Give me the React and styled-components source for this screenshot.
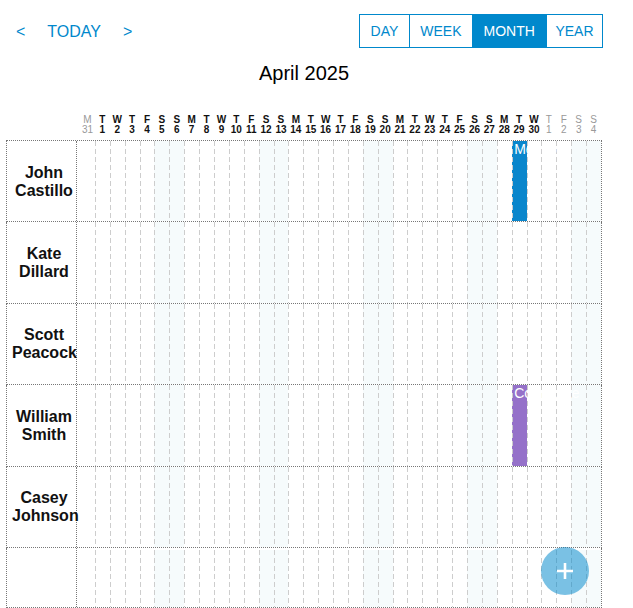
import React from 'react';
import styled, { createGlobalStyle } from 'styled-components';

const BLUE = '#0088cc';

const GlobalStyle = createGlobalStyle`
  html, body { margin: 0; padding: 0; background: #fff; }
  body { font-family: "Liberation Sans", Arial, sans-serif; color: #000; }
`;

const Page = styled.div`
  position: relative;
  width: 597px;
  margin-left: 6px;
`;

const Toolbar = styled.div`
  display: flex;
  align-items: center;
  justify-content: space-between;
  padding-top: 14px;
`;

const Nav = styled.div`
  display: flex;
  align-items: center;
  gap: 22px;
  padding-left: 10px;
  padding-top: 1px;
`;

const NavButton = styled.button`
  border: 0;
  background: none;
  padding: 0;
  font-family: inherit;
  font-size: 16px;
  line-height: 18px;
  color: ${BLUE};
  cursor: pointer;
`;

const ViewSwitch = styled.div`
  display: flex;
  border: 1px solid ${BLUE};
  height: 32px;
`;

const ViewButton = styled.button`
  border: 0;
  border-left: ${p => (p.$first ? '0' : `1px solid ${BLUE}`)};
  background: ${p => (p.$active ? BLUE : '#fff')};
  color: ${p => (p.$active ? '#fff' : BLUE)};
  font-family: inherit;
  font-size: 14px;
  padding: 0 ${p => p.$pad || 10}px;
  height: 32px;
  cursor: pointer;
`;

const Title = styled.h1`
  margin: 14px 0 0;
  text-align: center;
  font-size: 20px;
  font-weight: normal;
  line-height: 23px;
  width: 596px;
`;

const HeaderRow = styled.div`
  display: flex;
  margin-top: 30px;
  padding-bottom: 5px;
  width: 596px;
`;

const HeaderSpacer = styled.div`
  width: 74px;
  flex: none;
`;

const DaysGrid = styled.div`
  display: grid;
  grid-template-columns: repeat(35, minmax(0, 1fr));
  width: 521px;
  flex: none;
`;

const DayLabel = styled.div`
  display: flex;
  flex-direction: column;
  align-items: center;
  font-size: 10px;
  line-height: 10px;
  font-weight: ${p => (p.$muted ? 'normal' : 'bold')};
  color: ${p => (p.$muted ? '#999' : '#111')};
  white-space: nowrap;
`;

const Table = styled.div`
  width: 596px;
  border-top: 1px dotted #777;
`;

const Row = styled.div`
  display: flex;
  box-sizing: border-box;
  height: ${p => (p.$filler ? '60px' : '81.4px')};
  border-left: 1px dotted #777;
  border-right: 1px dotted #777;
  border-bottom: 1px dotted #777;
`;

const NameCell = styled.div`
  box-sizing: border-box;
  width: 70px;
  flex: none;
  border-right: 1px dotted #777;
  padding-left: 5px;
  padding-top: 1px;
  display: flex;
  align-items: center;
  justify-content: center;
  text-align: center;
  font-size: 16px;
  line-height: 18px;
  font-weight: bold;
  color: #111;
`;

const NameText = styled.div`
  width: 64px;
`;

const RowDays = styled(DaysGrid)`
  margin-left: 3px;
  padding-top: ${p => (p.$filler ? '2px' : '0')};
`;

const DayCell = styled.div`
  min-width: 0;
  background-color: ${p => p.$bg || (p.$weekend ? '#f6fbfc' : 'transparent')};
  background-image: ${p =>
    p.$first ? 'none' : 'repeating-linear-gradient(to bottom, #cdcdcd 0 5px, transparent 5px 8px)'};
  background-size: 1px 100%;
  background-repeat: no-repeat;
  background-position: left top;
`;

const EventLabel = styled.span`
  position: relative;
  z-index: 1;
  display: block;
  padding-left: 2.5px;
  font-size: 14px;
  line-height: 16px;
  color: #fff;
  white-space: nowrap;
`;

const Fab = styled.button`
  position: absolute;
  left: 535px;
  top: 547px;
  width: 48px;
  height: 48px;
  border: 0;
  border-radius: 50%;
  background: rgba(0, 136, 204, 0.52);
  display: flex;
  align-items: center;
  justify-content: center;
  padding: 0;
  cursor: pointer;
`;

const LETTERS = ['M', 'T', 'W', 'T', 'F', 'S', 'S'];
const days = Array.from({ length: 35 }, (_, i) => {
  const d = new Date(2025, 2, 31 + i);
  return {
    letter: LETTERS[i % 7],
    num: d.getDate(),
    inMonth: d.getMonth() === 3,
    weekend: i % 7 >= 5,
  };
});

const people = [
  { first: 'John', last: 'Castillo', events: [{ day: 29, title: 'Meeting', color: '#0a86cc' }] },
  { first: 'Kate', last: 'Dillard', events: [] },
  { first: 'Scott', last: 'Peacock', events: [] },
  { first: 'William', last: 'Smith', events: [{ day: 29, title: 'Court date', color: '#9571c9' }] },
  { first: 'Casey', last: 'Johnson', events: [] },
];

function DayCells({ events = [], filler }) {
  return (
    <RowDays $filler={filler}>
      {days.map((d, i) => {
        const ev = events.find(e => e.day === i);
        return (
          <DayCell key={i} $first={i === 0} $weekend={d.weekend} $bg={ev && ev.color}>
            {ev && <EventLabel>{ev.title}</EventLabel>}
          </DayCell>
        );
      })}
    </RowDays>
  );
}

export default function App() {
  return (
    <>
      <GlobalStyle />
      <Page>
        <Toolbar>
          <Nav>
            <NavButton>&lt;</NavButton>
            <NavButton>TODAY</NavButton>
            <NavButton>&gt;</NavButton>
          </Nav>
          <ViewSwitch>
            <ViewButton $first $pad={11}>DAY</ViewButton>
            <ViewButton $pad={10}>WEEK</ViewButton>
            <ViewButton $active $pad={11}>MONTH</ViewButton>
            <ViewButton $pad={8.5}>YEAR</ViewButton>
          </ViewSwitch>
        </Toolbar>
        <Title>April 2025</Title>
        <HeaderRow>
          <HeaderSpacer />
          <DaysGrid>
            {days.map((d, i) => (
              <DayLabel key={i} $muted={!d.inMonth}>
                <span>{d.letter}</span>
                <span>{d.num}</span>
              </DayLabel>
            ))}
          </DaysGrid>
        </HeaderRow>
        <Table>
          {people.map(p => (
            <Row key={p.first}>
              <NameCell>
                <NameText>
                  {p.first}
                  <br />
                  {p.last}
                </NameText>
              </NameCell>
              <DayCells events={p.events} />
            </Row>
          ))}
          <Row $filler>
            <NameCell />
            <DayCells filler />
          </Row>
        </Table>
        <Fab aria-label="Add">
          <svg width="18" height="18" viewBox="0 0 18 18">
            <path d="M9 1v16M1 9h16" stroke="#fff" strokeWidth="2.6" fill="none" />
          </svg>
        </Fab>
      </Page>
    </>
  );
}
